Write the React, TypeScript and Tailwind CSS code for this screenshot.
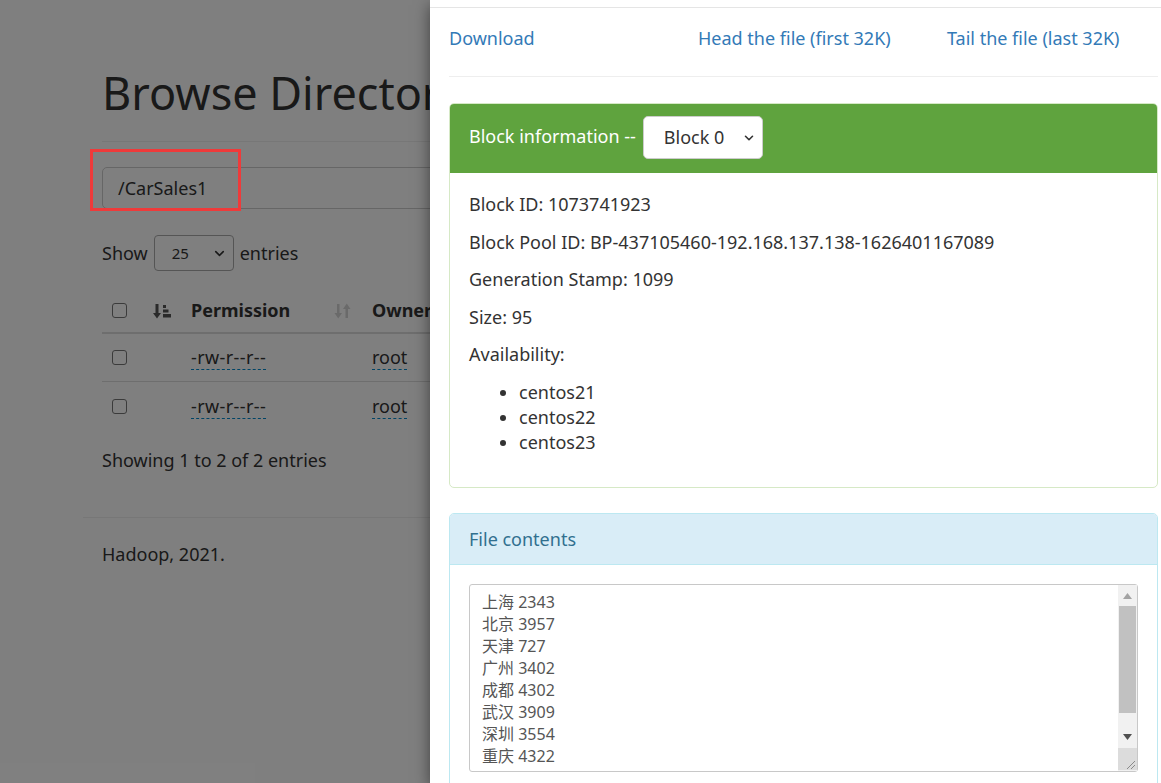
import { ChevronDown } from "lucide-react";

const cities = [
  ["上海", "2343"],
  ["北京", "3957"],
  ["天津", "727"],
  ["广州", "3402"],
  ["成都", "4302"],
  ["武汉", "3909"],
  ["深圳", "3554"],
  ["重庆", "4322"],
];

const rows = [
  { perm: "-rw-r--r--", owner: "root" },
  { perm: "-rw-r--r--", owner: "root" },
];

const SortActive = () => (
  <svg width="19" height="16" viewBox="0 0 19 16" className="text-[#555]">
    <rect x="2.5" y="1" width="3" height="10" fill="currentColor" />
    <polygon points="0,10 8,10 4,15.5" fill="currentColor" />
    <rect x="10" y="2" width="3" height="3" fill="currentColor" />
    <rect x="10" y="6.5" width="5.5" height="3" fill="currentColor" />
    <rect x="10" y="11" width="8" height="3.5" fill="currentColor" />
  </svg>
);

const SortBoth = () => (
  <svg width="18" height="16" viewBox="0 0 18 16" className="text-[#d4d4d4]">
    <rect x="3" y="1" width="2.5" height="10" fill="currentColor" />
    <polygon points="0.5,10 8,10 4.25,15.5" fill="currentColor" />
    <rect x="11.5" y="5" width="2.5" height="10" fill="currentColor" />
    <polygon points="9,6 16.5,6 12.75,0.5" fill="currentColor" />
  </svg>
);

const Checkbox = () => (
  <div className="h-[15px] w-[15px] rounded-[3px] border border-[#767676] bg-white" />
);

const Triangle = ({ up, color }: { up?: boolean; color: string }) => (
  <svg width="9" height="6" viewBox="0 0 9 6">
    <polygon points={up ? "0,6 9,6 4.5,0" : "0,0 9,0 4.5,6"} fill={color} />
  </svg>
);

export default function App() {
  return (
    <div className="relative h-[783px] w-full overflow-hidden bg-white font-['Noto_Sans','Noto_Sans_CJK_SC',sans-serif] text-[#333]">
      {/* page behind the dialog */}
      <div className="ml-[83px] w-[940px] pt-[68px]">
        <div className="mx-[19px] border-b border-[#eee] pb-[23px]">
          <h1 className="text-[45px] font-normal leading-[50px]">Browse Directory</h1>
        </div>

        <div className="px-[19px]">
          <div className="mt-[25px] flex h-[42px] items-center rounded-[5px] border border-[#ccc] px-[15px] text-[18px]">
            /CarSales1
          </div>

          <div className="mt-[26px] flex h-[36px] items-center text-[18px]">
            <span>Show</span>
            <div className="mx-[6px] flex h-[36px] w-[80px] items-center justify-between rounded-[4px] border border-[#aaa] pl-[17px] pr-[6px] text-[15px]">
              <span>25</span>
              <ChevronDown size={15} strokeWidth={2.5} />
            </div>
            <span>entries</span>
          </div>

          <div className="mt-[18px] text-[18px]">
            <div className="grid h-[45px] grid-cols-[79px_181px_1fr] items-center border-b-2 border-[#ddd] font-bold">
              <div className="flex items-center justify-between pl-[10px] pr-[9px]">
                <Checkbox />
                <SortActive />
              </div>
              <div className="flex items-center justify-between pl-[10px] pr-[10px]">
                <span>Permission</span>
                <SortBoth />
              </div>
              <div className="pl-[10px]">Owner</div>
            </div>
            {rows.map((r, i) => (
              <div
                key={i}
                className={`grid h-[48px] grid-cols-[79px_181px_1fr] items-center ${i === 0 ? "border-b border-[#ddd]" : ""}`}
              >
                <div className="pl-[10px]">
                  <Checkbox />
                </div>
                <div className="pl-[10px]">
                  <span className="inline-block border-b border-dashed border-[#0088cc] leading-[24px] tracking-[0.4px]">{r.perm}</span>
                </div>
                <div className="pl-[10px]">
                  <span className="inline-block border-b border-dashed border-[#0088cc] leading-[24px]">{r.owner}</span>
                </div>
              </div>
            ))}
          </div>

          <p className="mt-[18px] text-[18px] leading-[25px]">Showing 1 to 2 of 2 entries</p>
        </div>

        <div className="mt-[44px] border-t border-[#eee] px-[19px] pt-[24px] text-[18px] leading-[25px]">
          Hadoop, 2021.
        </div>
      </div>

      {/* backdrop */}
      <div className="absolute inset-0 bg-black/50" />

      {/* annotation */}
      <div className="absolute left-[90px] top-[149px] h-[62px] w-[151px] border-[3px] border-[#ef3a3a]" />

      {/* dialog */}
      <div className="absolute left-[430px] top-0 h-[783px] w-[747px] bg-white shadow-[0_5px_15px_rgba(0,0,0,0.5)]">
        <div className="h-[8px] border-b border-[#e5e5e5]" />
        <div className="px-[19px] pt-[18px]">
          <div className="-mx-[19px] grid grid-cols-3 text-[18px] leading-[25px] text-[#337ab7]">
            <a className="px-[19px]">Download</a>
            <a className="px-[19px]">Head the file (first 32K)</a>
            <a className="px-[19px]">Tail the file (last 32K)</a>
          </div>

          <div className="mt-[25px] border-t border-[#eee]" />

          <div className="mt-[26px] rounded-[5px] border border-[#d6e9c6]">
            <div className="flex h-[69px] items-center rounded-t-[4px] bg-[#5fa33e] px-[19px]">
              <span className="-mt-[4px] text-[18px] text-white">Block information --</span>
              <div className="-mt-[2px] ml-[7px] flex h-[43px] w-[120px] items-center justify-between rounded-[5px] border border-[#ccc] bg-white pl-[20px] pr-[6px] text-[18px] text-[#333]">
                <span>Block 0</span>
                <ChevronDown size={14} strokeWidth={2.75} />
              </div>
            </div>
            <div className="px-[19px] pb-[20px] pt-[19px] text-[18px] leading-[25px]">
              <p className="mb-[12.5px]">Block ID: 1073741923</p>
              <p className="mb-[12.5px]">Block Pool ID: BP-437105460-192.168.137.138-1626401167089</p>
              <p className="mb-[12.5px]">Generation Stamp: 1099</p>
              <p className="mb-[12.5px]">Size: 95</p>
              <p className="mb-[12.5px]">Availability:</p>
              <ul className="mb-[12.5px] list-disc pl-[50px]">
                <li>centos21</li>
                <li>centos22</li>
                <li>centos23</li>
              </ul>
            </div>
          </div>

          <div className="mt-[25px] rounded-[5px] border border-[#bce8f1]">
            <div className="flex h-[51px] items-center rounded-t-[4px] border-b border-[#bce8f1] bg-[#d9edf7] px-[19px] text-[18px] text-[#31708f]">
              File contents
            </div>
            <div className="p-[19px]">
              <div className="flex h-[188px] rounded-[3px] border border-[#c8c8c8]">
                <div className="flex-1 overflow-hidden pl-[12px] pt-[6px] text-[16px] leading-[22px] text-[#555]">
                  {cities.map(([c, n]) => (
                    <div key={c}>
                      {c} {n}
                    </div>
                  ))}
                </div>
                <div className="flex w-[19px] flex-col bg-[#f1f1f1]">
                  <div className="flex h-[21px] items-center justify-center">
                    <Triangle up color="#a3a3a3" />
                  </div>
                  <div className="h-[120px] px-[1px]">
                    <div className="h-[107px] bg-[#c1c1c1]" />
                  </div>
                  <div className="flex h-[22px] items-center justify-center">
                    <Triangle color="#505050" />
                  </div>
                  <div className="relative h-[22px] bg-[#dcdcdc]">
                    <svg width="19" height="22" viewBox="0 0 19 22" className="absolute inset-0">
                      <line x1="17" y1="13" x2="9" y2="21" stroke="#8a8a8a" strokeWidth="1" />
                      <line x1="17" y1="17" x2="13" y2="21" stroke="#8a8a8a" strokeWidth="1" />
                    </svg>
                  </div>
                </div>
              </div>
            </div>
          </div>
        </div>
      </div>
    </div>
  );
}
